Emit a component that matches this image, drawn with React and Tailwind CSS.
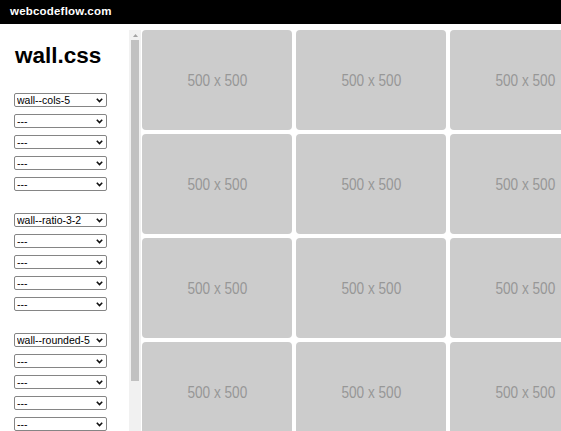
import React from 'react';

const groups = [
  ['wall--cols-5', '---', '---', '---', '---'],
  ['wall--ratio-3-2', '---', '---', '---', '---'],
  ['wall--rounded-5', '---', '---', '---', '---'],
];

const Select = ({ value }) => (
  <div className="relative w-[93px] h-[14px]">
    <select
      defaultValue={value}
      className="appearance-none block w-[93px] h-[14px] border border-[#858585] rounded-[2px] bg-white pl-[2px] text-[10.5px] leading-[12px] text-black font-['Liberation_Sans',Arial,sans-serif]"
    >
      <option>{value}</option>
    </select>
    <svg
      className="pointer-events-none absolute right-[4px] top-[5px]"
      width="7"
      height="5"
      viewBox="0 0 7 5"
    >
      <path d="M0.8 0.8 L3.5 3.6 L6.2 0.8" fill="none" stroke="#111" strokeWidth="1.6" />
    </svg>
  </div>
);

const Tile = () => (
  <div className="w-[150px] h-[100px] rounded-[4px] bg-[#cccccc] flex items-center justify-center">
    <span className="inline-block scale-x-[0.8] text-[17px] leading-[20px] pt-[1px] text-[#979797] font-['Liberation_Sans',Arial,sans-serif] whitespace-nowrap">
      500 x 500
    </span>
  </div>
);

export default function App() {
  return (
    <div className="w-[561px] h-[431px] overflow-hidden bg-white flex flex-col font-['Liberation_Sans',Arial,sans-serif]">
      {/* Barra superior */}
      <div className="h-[24px] bg-black flex items-center pl-[10px] shrink-0">
        <span className="text-white text-[11.5px] font-bold tracking-[0.2px]">webcodeflow.com</span>
      </div>

      <div className="flex flex-1 min-h-0">
        {/* Sidebar */}
        <div className="w-[129px] shrink-0 pl-[14px] pt-[19px]">
          <h1 className="text-[22.5px] leading-[26px] font-bold text-black mb-[24px] pl-[1px]">wall.css</h1>
          <div className="flex flex-col gap-[22px]">
            {groups.map((group, gi) => (
              <div key={gi} className="flex flex-col gap-[7px]">
                {group.map((v, i) => (
                  <Select key={i} value={v} />
                ))}
              </div>
            ))}
          </div>
        </div>

        {/* Scrollbar */}
        <div className="w-[12px] shrink-0 mt-[6px] bg-[#f1f1f1] flex flex-col items-center">
          <div className="h-[10px] w-full flex items-center justify-center">
            <svg width="5" height="3" viewBox="0 0 5 3">
              <path d="M0 3 L2.5 0 L5 3 Z" fill="#a3a3a3" />
            </svg>
          </div>
          <div className="w-[8px] h-[341px] bg-[#c1c1c1]" />
        </div>

        {/* Grade */}
        <div className="ml-[1px] pt-[6px] overflow-hidden">
          <div className="grid grid-cols-[repeat(5,150px)] gap-[4px]">
            {Array.from({ length: 20 }).map((_, i) => (
              <Tile key={i} />
            ))}
          </div>
        </div>
      </div>
    </div>
  );
}
